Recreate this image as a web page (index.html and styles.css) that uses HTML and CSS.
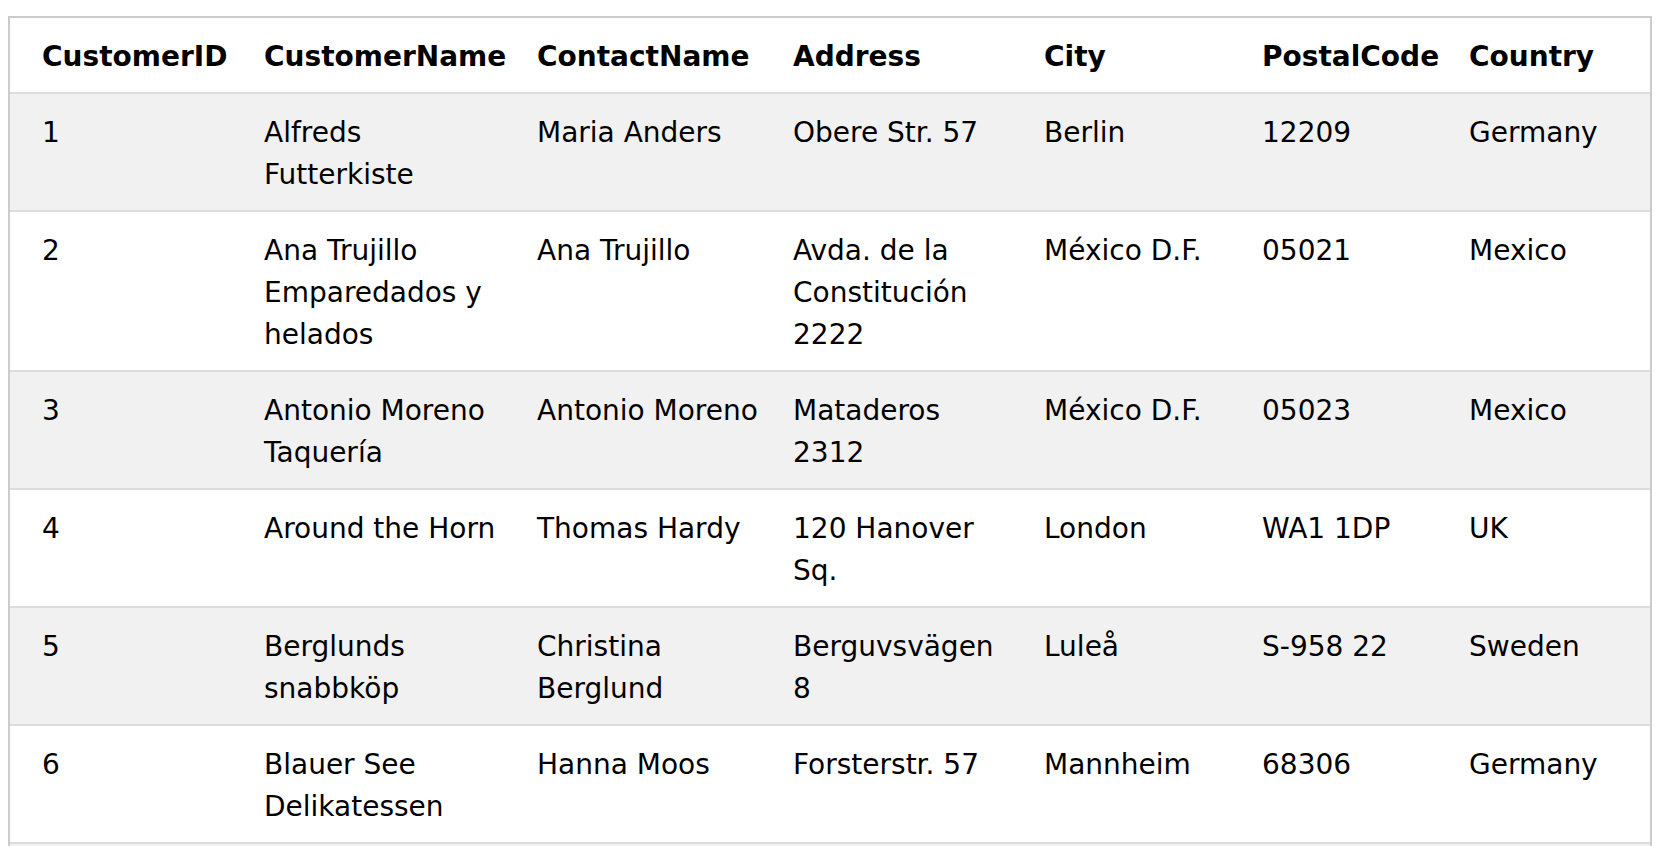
FILE: index.html
```html
<!DOCTYPE html>
<html lang="en">
<head>
<meta charset="utf-8">
<title>Customers</title>
<link rel="stylesheet" href="styles.css">
</head>
<body>
<table class="customers">
  <colgroup>
    <col class="c-id">
    <col class="c-name">
    <col class="c-contact">
    <col class="c-address">
    <col class="c-city">
    <col class="c-postal">
    <col class="c-country">
  </colgroup>
  <thead>
    <tr>
      <th>CustomerID</th>
      <th>CustomerName</th>
      <th>ContactName</th>
      <th>Address</th>
      <th>City</th>
      <th>PostalCode</th>
      <th>Country</th>
    </tr>
  </thead>
  <tbody>
    <tr>
      <td>1</td>
      <td>Alfreds Futterkiste</td>
      <td>Maria Anders</td>
      <td>Obere Str. 57</td>
      <td>Berlin</td>
      <td>12209</td>
      <td>Germany</td>
    </tr>
    <tr>
      <td>2</td>
      <td>Ana Trujillo Emparedados y helados</td>
      <td>Ana Trujillo</td>
      <td>Avda. de la Constitución 2222</td>
      <td>México D.F.</td>
      <td>05021</td>
      <td>Mexico</td>
    </tr>
    <tr>
      <td>3</td>
      <td>Antonio Moreno Taquería</td>
      <td>Antonio Moreno</td>
      <td>Mataderos 2312</td>
      <td>México D.F.</td>
      <td>05023</td>
      <td>Mexico</td>
    </tr>
    <tr>
      <td>4</td>
      <td>Around the Horn</td>
      <td>Thomas Hardy</td>
      <td>120 Hanover Sq.</td>
      <td>London</td>
      <td>WA1 1DP</td>
      <td>UK</td>
    </tr>
    <tr>
      <td>5</td>
      <td>Berglunds snabbköp</td>
      <td>Christina Berglund</td>
      <td>Berguvsvägen 8</td>
      <td>Luleå</td>
      <td>S-958 22</td>
      <td>Sweden</td>
    </tr>
    <tr>
      <td>6</td>
      <td>Blauer See Delikatessen</td>
      <td>Hanna Moos</td>
      <td>Forsterstr. 57</td>
      <td>Mannheim</td>
      <td>68306</td>
      <td>Germany</td>
    </tr>
    <tr>
      <td>7</td>
      <td>Blondel père et fils</td>
      <td>Frédérique Citeaux</td>
      <td>24, place Kléber</td>
      <td>Strasbourg</td>
      <td>67000</td>
      <td>France</td>
    </tr>
  </tbody>
</table>
</body>
</html>
```

FILE: styles.css
```css
html, body {
  background: #ffffff;
}

body {
  margin: 8px;
  font-family: "DejaVu Sans", Verdana, sans-serif;
  font-size: 28px;
  line-height: 42px;
  color: #000000;
}

.customers {
  width: 100%;
  margin-top: 8px;
  table-layout: fixed;
  border-collapse: separate;
  border-spacing: 0;
  border: 2px solid #cccccc;
}

.c-id { width: 238px; }
.c-name { width: 273px; }
.c-contact { width: 256px; }
.c-address { width: 251px; }
.c-city { width: 218px; }
.c-postal { width: 207px; }
.c-country { width: 197px; }

.customers th,
.customers td {
  box-sizing: border-box;
  padding: 18px 16px 14px;
  text-align: left;
  vertical-align: top;
  border-bottom: 2px solid #dddddd;
}

.customers th {
  font-weight: bold;
}

.customers th:first-child,
.customers td:first-child {
  padding-left: 32px;
}

.customers tbody tr:nth-child(odd) {
  background: #f1f1f1;
}

.customers tbody tr:nth-child(even) {
  background: #ffffff;
}
```
